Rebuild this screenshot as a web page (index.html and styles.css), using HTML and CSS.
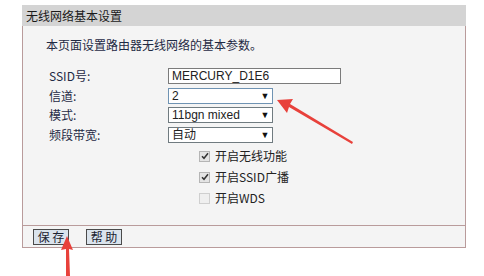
FILE: index.html
```html
<!DOCTYPE html>
<html lang="zh-CN">
<head>
<meta charset="utf-8">
<title>无线网络基本设置</title>
<link rel="stylesheet" href="styles.css">
</head>
<body>
<div class="panel">
  <div class="head">无线网络基本设置</div>
  <div class="body">
    <p class="desc">本页面设置路由器无线网络的基本参数。</p>
    <div class="row">
      <span class="label">SSID号:</span>
      <span class="field input">MERCURY_D1E6</span>
    </div>
    <div class="row">
      <span class="label">信道:</span>
      <span class="field select focus"><span class="val">2</span><span class="arr">▼</span></span>
    </div>
    <div class="row">
      <span class="label">模式:</span>
      <span class="field select"><span class="val">11bgn mixed</span><span class="arr">▼</span></span>
    </div>
    <div class="row">
      <span class="label">频段带宽:</span>
      <span class="field select"><span class="val">自动</span><span class="arr">▼</span></span>
    </div>
    <div class="checks">
      <div class="check"><span class="box on"><svg width="8" height="8" viewBox="0 0 8 8"><path d="M1 4.2 L3 6.3 L7 1.2" fill="none" stroke="#333" stroke-width="1.5"/></svg></span><span>开启无线功能</span></div>
      <div class="check"><span class="box on"><svg width="8" height="8" viewBox="0 0 8 8"><path d="M1 4.2 L3 6.3 L7 1.2" fill="none" stroke="#333" stroke-width="1.5"/></svg></span><span>开启SSID广播</span></div>
      <div class="check off"><span class="box"></span><span>开启WDS</span></div>
    </div>
  </div>
  <div class="foot">
    <span class="btn">保 存</span>
    <span class="btn">帮 助</span>
  </div>
</div>
<svg class="arrows" width="484" height="276" viewBox="0 0 484 276">
  <path d="M352 144 L289 107 L287 113 L277 100 L293 99 L290 104 L353 142 Z" fill="#e8413b"/>
  <path d="M66 276 L66 249 L61 250 L67 236 L73 250 L69 249 L70 276 Z" fill="#e8413b"/>
</svg>
</body>
</html>
```
FILE: styles.css
```css
html, body {
  margin: 0;
  padding: 0;
  background: #ffffff;
}
body {
  width: 484px;
  height: 276px;
  overflow: hidden;
  position: relative;
  font-family: "Noto Sans CJK SC", "Liberation Sans", sans-serif;
  font-size: 12px;
  color: #222;
}
.panel {
  margin: 5px 0 0 22px;
  width: 444px;
}
.head {
  height: 21px;
  line-height: 21px;
  background: #d4d4d4;
  padding-left: 4px;
  color: #1a1a1a;
}
.body {
  border-left: 1px solid #b99b9b;
  border-right: 1px solid #b99b9b;
  background: #f4f4f4;
  height: 199px;
  padding-left: 23px;
  box-sizing: border-box;
  padding-top: 11px;
}
.desc {
  margin: 0 0 13px 0;
  line-height: 16px;
  height: 16px;
  color: #1f2a44;
}
.row {
  display: flex;
  align-items: center;
  height: 19.7px;
  margin-left: 3px;
}
.label {
  width: 119px;
  flex: none;
  color: #1f2a44;
  line-height: 16px;
}
.field {
  height: 16px;
  box-sizing: border-box;
  background: #fff;
  display: flex;
  align-items: center;
  font-family: "Liberation Sans", "Noto Sans CJK SC", sans-serif;
  font-size: 12px;
  line-height: 14px;
  color: #222;
}
.input {
  width: 173px;
  border: 1px solid #7b7b7b;
  padding-left: 3px;
}
.select {
  width: 105px;
  border: 1px solid #707b80;
  padding-left: 3px;
  justify-content: space-between;
}
.select.focus {
  border-color: #6f93b3;
}
.arr {
  font-size: 9px;
  width: 14px;
  text-align: center;
  color: #111;
}
.checks {
  margin-left: 153px;
  margin-top: 1px;
}
.check {
  display: flex;
  align-items: center;
  height: 21px;
  line-height: 16px;
  color: #222;
}
.box {
  width: 9px;
  height: 9px;
  border: 1px solid #b5b5b5;
  background: #e4e4e4;
  margin-right: 5px;
  display: flex;
  align-items: center;
  justify-content: center;
}
.check.off .box {
  background: #efefef;
  border-color: #cfcfcf;
}
.foot {
  border: 1px solid #b99b9b;
  background: #f4f4f4;
  height: 23px;
  box-sizing: border-box;
  display: flex;
  align-items: center;
  padding-left: 10px;
  gap: 17px;
}
.btn {
  width: 36px;
  height: 16px;
  box-sizing: border-box;
  border: 1px solid #4a4a4a;
  background: #dae3ec;
  display: flex;
  align-items: center;
  justify-content: center;
  font-size: 12px;
  line-height: 14px;
  color: #1a2230;
}
.arrows {
  position: absolute;
  left: 0;
  top: 0;
}
```
